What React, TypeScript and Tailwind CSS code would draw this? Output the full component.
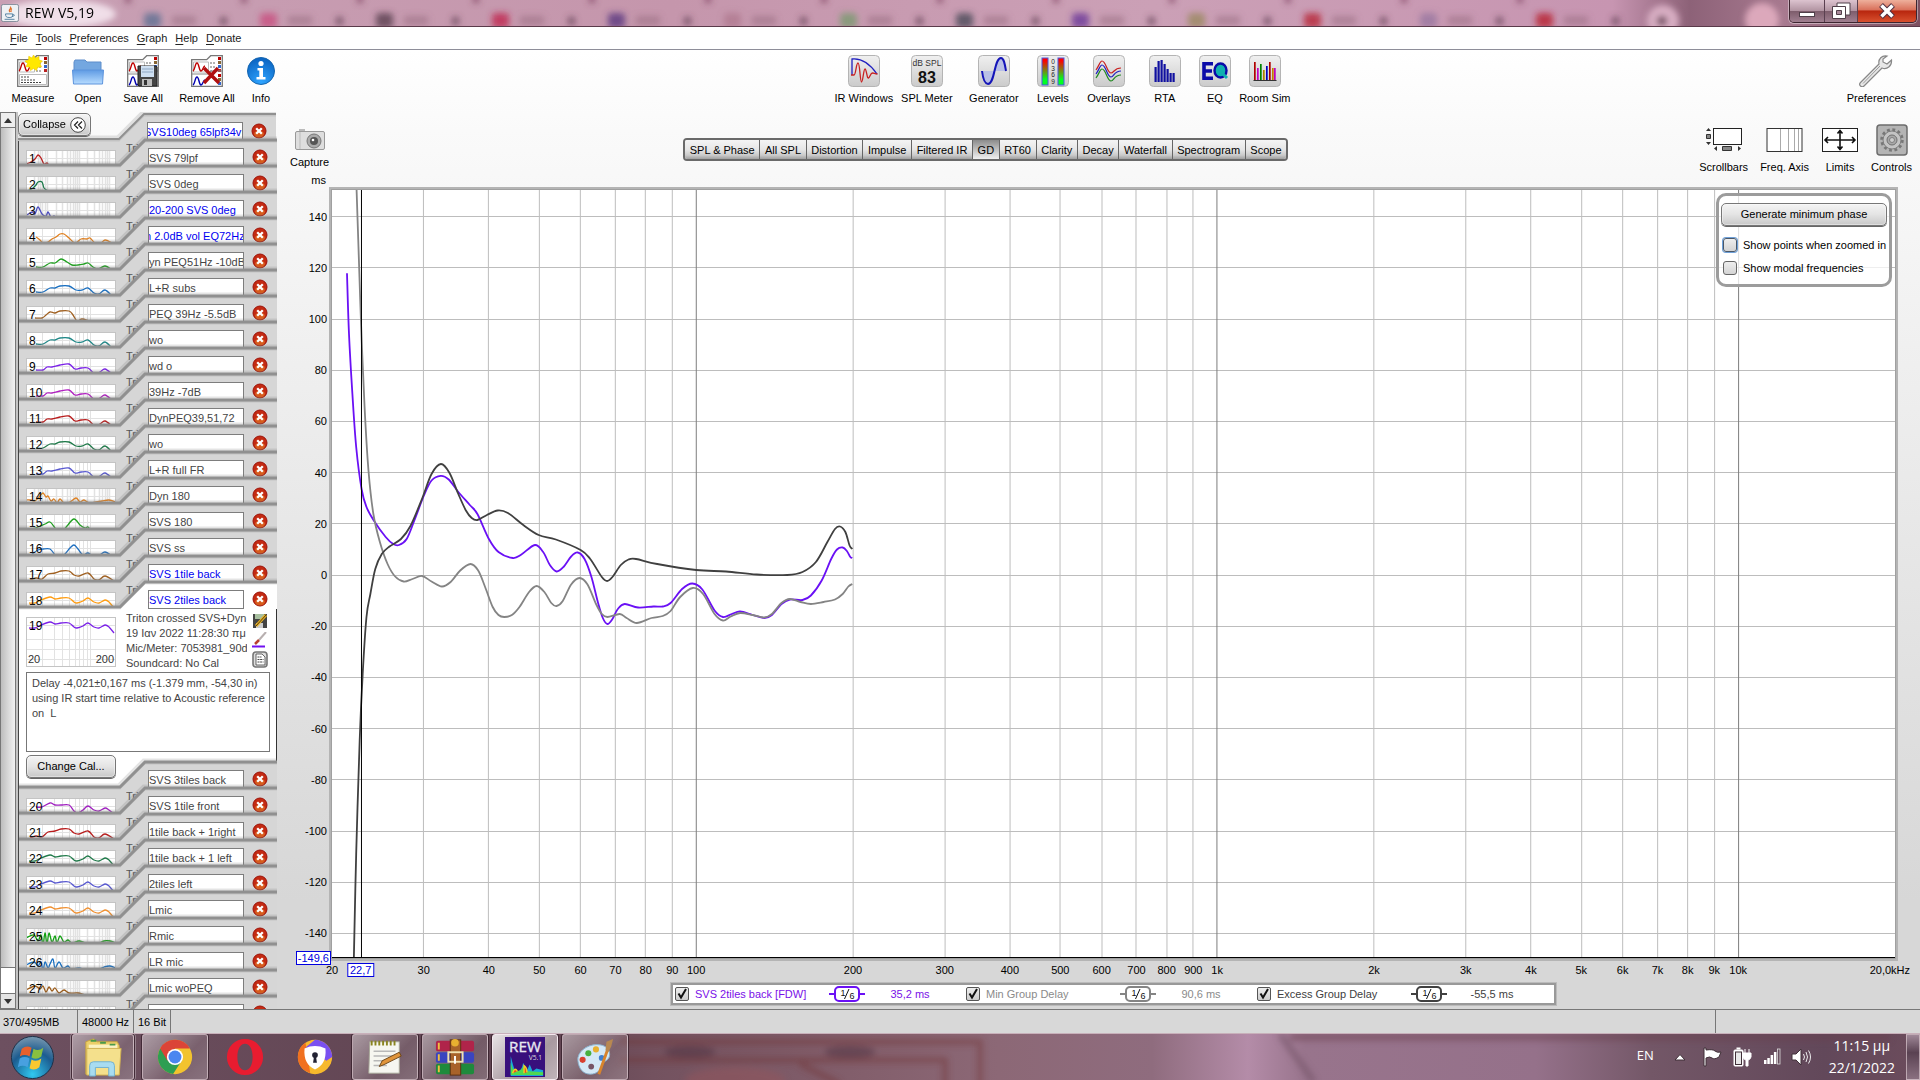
import React from 'react';

type Point = [number, number];

/* ---------- helpers ---------- */

// Catmull-Rom spline through the points, as a path string
const smooth = (pts: Point[]) => {
  let d = `M${pts[0][0]},${pts[0][1]}`;
  for (let i = 0; i < pts.length - 1; i++) {
    const p0 = pts[i - 1] ?? pts[i];
    const p1 = pts[i];
    const p2 = pts[i + 1];
    const p3 = pts[i + 2] ?? p2;
    d += `C${p1[0] + (p2[0] - p0[0]) / 6},${p1[1] + (p2[1] - p0[1]) / 6} ${p2[0] - (p3[0] - p1[0]) / 6},${p2[1] - (p3[1] - p1[1]) / 6} ${p2[0]},${p2[1]}`;
  }
  return d;
};

const toPoints = (s: string): Point[] => s.trim().split(/\s+/).map((p) => p.split(',').map(Number) as Point);

const PLOT_W = 1564;
const PLOT_H = 768;
const freqPct = (f: number) => (Math.log10(f / 20) / 3) * 100;
const msPct = (v: number) => ((150.4 - v) / 300) * 100;

/* ---------- data ---------- */

const THUMB_SHAPES = {
  low: '0,14 5,12 9,9 12,5 15,8 18,14 21,13 23,15 26,15',
  lowWide: '2,15 7,12 10,9 12,6 16,6 18,12 22,15',
  lowSpiky: '1,13 6,10 9,12 12,5 16,12 20,14 22,10 25,15 28,14 29,16',
  hump: '10,9 14,12 17,15 22,14 26,11 30,9 34,6 38,6 43,10 49,15 55,11 61,11 64,10 69,15 74,16 79,12 86,15',
  hump2: '10,13 17,13 24,9 29,9 35,5 41,8 46,11 52,11 58,10 62,9 67,13 72,15 79,12 86,16',
  level: '10,12 17,12 24,8 29,8 34,6 43,6 50,10 56,10 62,8 68,13 73,14 79,10 86,16',
  cut: '9,12 16,12 20,9 24,6 29,7 34,5 43,5 47,9 51,15 56,13 63,15 66,16',
  bassy: '10,12 17,12 21,9 26,9 34,7 43,6 49,11 55,10 62,10 69,16 74,14 79,11 86,16',
  noise: '0,12 5,12 9,13 14,8 17,5 20,9 22,8 25,13 28,11 31,15 34,11 38,15 44,14 50,10 54,14 58,12 63,15 70,14 76,13 83,12 90,14',
  arch: '6,15 12,13 19,10 24,8 29,14 32,17 36,18 41,12 48,5 54,11 59,14 62,13 66,17 74,16 82,16',
  arch2: '6,14 12,10 17,9 24,9 29,15 32,18 38,15 44,8 48,5 52,9 57,15 62,13 68,17 74,15 79,12 86,16',
  full: '3,11 9,11 15,8 24,5 29,7 35,6 43,6 48,10 51,11 57,9 62,6 68,10 73,11 79,8 83,10 88,16',
  full2: '10,9 16,9 24,5 29,7 35,7 43,7 48,13 52,15 57,12 62,8 68,12 73,13 79,10 83,12 87,15',
  full3: '4,14 10,12 16,13 22,8 29,7 35,5 43,5 48,9 53,10 62,7 68,13 73,14 79,10 88,15',
  spikes: '0,10 8,7 12,13 15,7 17,17 19,5 21,16 23,5 26,14 29,8 31,15 34,8 38,14 42,12 46,15 53,13 60,15 70,16 78,13 84,13 90,15',
  spikes2: '0,11 8,8 12,12 15,8 17,17 19,8 22,14 24,10 27,5 29,14 33,8 37,14 42,12 45,15 53,14 60,16 70,16 78,13 84,12 90,14',
  slope: '0,10 9,6 14,9 17,6 20,12 23,7 26,11 29,8 33,13 38,10 43,13 52,13 60,15 70,15 80,16 90,16',
};

interface Measurement {
  title: string;
  color: string;
  shape: keyof typeof THUMB_SHAPES;
  blue?: boolean;
  wide?: boolean;
  scrolled?: boolean;
}

const MEASUREMENTS: Measurement[] = [
  { title: 'SVS10deg 65lpf34v', color: '#b81c1c', shape: 'low', blue: true, wide: true, scrolled: true },
  { title: 'SVS 79lpf', color: '#1a7a4a', shape: 'lowWide', wide: true },
  { title: 'SVS 0deg', color: '#4a4ac0', shape: 'lowSpiky', wide: true },
  { title: '20-200 SVS 0deg', color: '#e08020', shape: 'hump', blue: true },
  { title: 'n 2.0dB vol EQ72Hz', color: '#20a020', shape: 'hump2', blue: true, scrolled: true },
  { title: 'yn PEQ51Hz -10dB', color: '#1a6fc0', shape: 'level' },
  { title: 'L+R subs', color: '#a06020', shape: 'cut' },
  { title: 'PEQ 39Hz -5.5dB', color: '#208888', shape: 'level' },
  { title: 'wo', color: '#7a20e8', shape: 'bassy' },
  { title: 'wd o', color: '#b020c0', shape: 'bassy' },
  { title: '39Hz -7dB', color: '#b81c1c', shape: 'bassy' },
  { title: 'DynPEQ39,51,72', color: '#207a4a', shape: 'level' },
  { title: 'wo', color: '#5858d0', shape: 'bassy' },
  { title: 'L+R full FR', color: '#e08020', shape: 'noise', wide: true },
  { title: 'Dyn 180', color: '#20a020', shape: 'arch' },
  { title: 'SVS 180', color: '#2070c0', shape: 'arch2' },
  { title: 'SVS ss', color: '#a06020', shape: 'full3' },
  { title: 'SVS 1tile back', color: '#ff9c10', shape: 'full', blue: true },
  { title: 'SVS 2tiles back', color: '#7a20e8', shape: 'full', blue: true },
  { title: 'SVS 3tiles back', color: '#a020c0', shape: 'full2' },
  { title: 'SVS 1tile front', color: '#b81c1c', shape: 'full3' },
  { title: '1tile back + 1right', color: '#207a4a', shape: 'full' },
  { title: '1tile back + 1 left', color: '#5858d0', shape: 'full' },
  { title: '2tiles left', color: '#f09030', shape: 'full' },
  { title: 'Lmic', color: '#10a010', shape: 'spikes', wide: true },
  { title: 'Rmic', color: '#1a70c0', shape: 'spikes2', wide: true },
  { title: 'LR mic', color: '#9a5a18', shape: 'slope', wide: true },
  { title: 'Lmic woPEQ', color: '#208888', shape: 'slope', wide: true },
  { title: '', color: '#7a20e8', shape: 'slope', wide: true },
];

const SELECTED = 18;

const GROUP_DELAY = `15,83.2 17,143.8 20.4,203.8 24.2,257 29.6,299 34.5,317 41.8,330.5 53.7,347 61.3,354 67,355 74.7,349 82.4,330.5 92,305.5 99.6,290.5 108.8,285.8
116.8,289.5 126.4,302 137.9,315 145.5,324 157,349 166.6,362 181,368 189.5,364.5 203,355 211.3,362 218,375 224.7,381.5 231.6,377 239.3,366.5 245.8,362.5 252.7,369
259.6,387 266,412 271,428 275.6,434 280.6,429 286,419 292.9,414 306.3,417.5 321.6,416.5 331,416.5 338.8,413 350.3,399 360.6,393.5 370.6,399.5 382.8,420.5
391.2,427 400,424 408.4,421.5 421,425 432.6,428 440.2,425 449.8,414 458.2,409.5 470.8,410 479.2,405.5 490,390.5 499.5,369 505.3,359.5 511,357.5 515.2,361 518.7,367 520.6,368`;

const MIN_GROUP_DELAY = `24.6,0 26.5,57 29.2,137 32.6,217 36.5,280.5 41.4,324 47.9,352 55.6,374 63.2,386.5 71.7,391.5 80.5,389 90,386 99.6,391.5 110,396.5 118.7,392
128.3,380.5 138.6,374 146.3,380.5 153.2,397 160.8,417 166.6,425 172.3,427 180,425 187.6,417 197.2,402 204.8,396 212.5,402 219.4,413 224.7,416 230.9,411
239.3,394.5 247.7,388 255.7,394.5 264.2,414 270,424 275.6,427 287.9,424 294.8,428 305,433 319.7,428 331,426 338.8,421 348.4,407 361,398 371.3,404 382.8,424
391.2,430.5 398.9,426.5 408.4,423 421,425 432.6,427.5 440.2,424 449.8,413 458.2,409 468.9,412 479.2,414 491.9,412 503.3,409.5 511,404 516.7,396.5 520.6,394`;

const EXCESS_GROUP_DELAY = `21.9,767 24.2,664 27.7,550.5 30.7,484 34.5,427 38.4,404 43.3,379 49.8,364 57.5,356.5 69,349 78.5,336 90,309 99.6,284 109,274 117.6,283
126.4,304 134,320.5 139.8,328 145.5,330 155,325 165.8,320.5 176,323 191.4,335 206.8,345 224,349.5 248.8,360 258.4,369 270,387 275.3,391 280.6,387 289,375
296.7,369.5 304.3,369 325.4,374 364.4,380 394.3,381.5 425,384.5 455.5,385 470.8,382 484.2,372 495.7,352 503.3,339 508.3,336.5 513.7,342 517.9,355.5 520.6,359`;

const GRID_FREQS = [
  30, 40, 50, 60, 70, 80, 90, 100, 200, 300, 400, 500, 600, 700, 800, 900, 1000, 2000, 3000, 4000, 5000, 6000, 7000, 8000, 9000, 10000,
];
const MS_VALUES = [140, 120, 100, 80, 60, 40, 20, 0, -20, -40, -60, -80, -100, -120, -140];

const freqLabel = (f: number) => (f >= 1000 ? `${f / 1000}k` : `${f}`);

/* ---------- title bar ---------- */

const BLURRED_TABS = [
  '#5f6f92', '#c85080', '#5a4050', '#c02850', '#5a3a80', '#b07a90', '#7a9a70', '#4a4a58', '#6a3a98', '#9a8a60', '#b82838', '#9878a0', '#b82030',
];

const TitleBar: React.FC = () => (
  <header className="relative flex h-[27px] shrink-0 items-start overflow-hidden border-b border-[#5a3a4a] bg-[linear-gradient(90deg,#c8a0b4_0%,#c596ac_35%,#cba0b6_60%,#c795b1_84%,#8d6278_88%,#a87a90_93%,#7d5060_100%)]">
    <svg className="absolute inset-0 h-full w-full" aria-hidden="true">
      <defs>
        <filter id="soft" x="-5%" y="-50%" width="110%" height="200%">
          <feGaussianBlur stdDeviation="3" />
        </filter>
      </defs>
      <g filter="url(#soft)">
        {BLURRED_TABS.map((color, i) => (
          <g key={i}>
            <rect x={144 + i * 116} y="13" width="17" height="15" rx="4" fill={color} opacity=".8" />
            <rect x={172 + i * 116} y="16" width="24" height="9" fill="#94687d" opacity=".5" />
            <rect x={220 + i * 116} y="17" width="7" height="8" fill="#5e3d4e" opacity=".7" />
            <rect x={125 + i * 116} y="-4" width="6" height="7" fill="#7a3c58" opacity=".7" />
          </g>
        ))}
        <circle cx="1663" cy="21" r="16" fill="#d8aec3" />
        <circle cx="1662" cy="21" r="5" fill="#6a4458" />
        <circle cx="1762" cy="20" r="17" fill="#dca8bb" />
        <ellipse cx="60" cy="14" rx="56" ry="14" fill="#f4e6ee" opacity=".9" />
      </g>
    </svg>
    <svg viewBox="0 0 20 20" className="relative mt-1 h-[18px] w-5" aria-hidden="true">
      <rect x=".5" y=".5" width="19" height="19" rx="2" fill="#eef1f4" stroke="#7b8794" />
      <path d="M10 3c3 2-3 3 0 6M12 5c-2 2 0 2-1 4" stroke="#e2702a" fill="none" strokeWidth="1.3" />
      <path d="M5 11h8c0 4-1 4-4 4s-4-1-4-4ZM13 12c3-1 2 2-1 2M4 17h11" stroke="#4b7a9c" fill="none" />
    </svg>
    <h1 className="relative ml-[5px] font-['Open_Sans',sans-serif] text-[14px] leading-[26px] text-black">REW V5,19</h1>
    <div className="relative ml-auto mr-[3px] flex h-[23px] overflow-hidden rounded-b-[5px] border border-t-0 border-[#3c2530] shadow-[0_0_0_1px_rgba(255,255,255,0.4)]">
      <button type="button" aria-label="Minimize" className="flex w-[35px] items-center justify-center border-r border-[#5a4050] bg-[linear-gradient(#dcc3cf,#b294a2_48%,#7d5c6b_50%,#a07f90)]">
        <svg viewBox="0 0 18 14" className="h-[14px] w-[18px]"><rect x="1.500" y="8.500" width="15" height="4" fill="#fff" stroke="#50404a" /></svg>
      </button>
      <button type="button" aria-label="Restore" className="flex w-[33px] items-center justify-center border-r border-[#5a4050] bg-[linear-gradient(#dcc3cf,#b294a2_48%,#7d5c6b_50%,#a07f90)]">
        <svg viewBox="0 0 20 18" className="h-[18px] w-5">
          <path d="M6 1h13v12H6z" fill="#fff" stroke="#50404a" />
          <path d="M1.500 4.500h13v12h-13z" fill="#fff" stroke="#50404a" />
          <path d="M5.500 8.500h5v4h-5z" fill="#a98a9a" stroke="#50404a" />
        </svg>
      </button>
      <button type="button" aria-label="Close" className="flex w-[58px] items-center justify-center bg-[linear-gradient(#eeb09c,#d9705a_45%,#b8260e_50%,#d8502e)]">
        <svg viewBox="0 0 18 16" className="h-4 w-[18px]">
          <path d="M3 2l12 12M15 2L3 14" stroke="#503040" strokeWidth="5.500" />
          <path d="M3.500 2.500l11 11M14.500 2.500l-11 11" stroke="#fff" strokeWidth="3.500" />
        </svg>
      </button>
    </div>
  </header>
);

const MenuBar: React.FC = () => (
  <nav className="flex h-[23px] shrink-0 items-center gap-2 border-b border-[#8e8e99] bg-white pl-[10px] text-[#222]">
    {['File', 'Tools', 'Preferences', 'Graph', 'Help', 'Donate'].map((m) => (
      <button type="button" key={m}>
        <span className="underline underline-offset-2">{m[0]}</span>
        {m.slice(1)}
      </button>
    ))}
  </nav>
);

/* ---------- toolbar icons ---------- */

const Tile: React.FC<{ children: React.ReactNode }> = ({ children }) => (
  <svg viewBox="0 0 32 32" className="h-8 w-8">
    <defs>
      <linearGradient id="tile" x1="0" y1="0" x2="0" y2="1">
        <stop offset="0" stopColor="#f0f0f0" />
        <stop offset="1" stopColor="#cbcbcb" />
      </linearGradient>
    </defs>
    <rect x=".5" y=".5" width="31" height="31" rx="4" fill="url(#tile)" stroke="#b4b4b4" />
    {children}
  </svg>
);

const Sheet: React.FC<{ stacked?: boolean; children: React.ReactNode }> = ({ stacked, children }) => (
  <svg viewBox="0 0 32 32" className="h-8 w-8">
    <path d="M.7 4.700h15l4-4h11.600v30.600H.7z" fill="#fff" stroke="#777" strokeWidth="1.300" />
    <path d="M2.500 7h15v10h-15z" fill="#fff" stroke="#bbb" />
    <path d="M2 16c2-1 2-8 4-8s2 8 4 8 2-5 4-5" fill="none" stroke="#c00000" strokeWidth="1.400" />
    <path d="M19 8h6M19 12h6M19 16h6" stroke="#666" strokeDasharray="2 1" />
    <rect x="27" y="2" width="3" height="3" fill="#b00" />
    <rect x="27" y="6" width="3" height="3" fill="#863" />
    <rect x="27" y="10" width="3" height="3" fill="#36c" />
    <rect x="27" y="14" width="3" height="3" fill="#b22" />
    {stacked ? (
      <>
        <path d="M1 19h16l3-3h11" fill="none" stroke="#888" />
        <path d="M2 30c2-1 2-8 4-8s2 8 4 8 2-5 4-5" fill="none" stroke="#0000b0" strokeWidth="1.400" />
        <rect x="27" y="19" width="3" height="3" fill="#b00" />
        <rect x="27" y="23" width="3" height="3" fill="#863" />
        <rect x="27" y="27" width="3" height="3" fill="#36c" />
      </>
    ) : (
      <>
        <path d="M2.500 19.500h27v10h-27z" fill="#fff" stroke="#bbb" />
        <path d="M4 22h8M4 25h14M4 27.500h20" stroke="#444" strokeDasharray="2 1" />
      </>
    )}
    {children}
  </svg>
);

const MeasureIcon = (
  <Sheet>
    <path d="M16.500 0l2 3 3.500-1.500 0 3.500 3.500 1-2.500 2.500 1.500 3.500-3.800.2-1.200 3.300-3-2-3 2-.8-3.500-3.700-.2 1.500-3.400L8 6l3.500-1 .3-3.700L15 3z" fill="#ffe800" stroke="#f0c800" strokeWidth=".6" />
  </Sheet>
);

const OpenIcon = (
  <svg viewBox="0 0 32 32" className="h-8 w-8">
    <defs>
      <linearGradient id="folder" x1="0" y1="0" x2="0" y2="1">
        <stop offset="0" stopColor="#5f9be4" />
        <stop offset="1" stopColor="#b7dcff" />
      </linearGradient>
    </defs>
    <path d="M2 7l1-2h10l2 2h14v10H2z" fill="#74a7e0" stroke="#5d8dca" />
    <path d="M.5 15h31l-1 14H1.500z" fill="url(#folder)" stroke="#5c93dc" />
  </svg>
);

const SaveAllIcon = (
  <Sheet stacked>
    <path d="M11 11h18l1 1v19H12l-1-1z" fill="#444" stroke="#222" />
    <rect x="14" y="11" width="13" height="11" fill="#cfe0f2" />
    <path d="M15 14h11M15 17h11" stroke="#8fa8c4" />
    <rect x="15" y="24" width="10" height="7" fill="#bbb" />
    <rect x="17" y="25" width="3" height="5" fill="#333" />
  </Sheet>
);

const RemoveAllIcon = (
  <Sheet stacked>
    <path d="M13 13l15 15M27 13L13 28" stroke="#b01010" strokeWidth="3.400" />
  </Sheet>
);

const InfoIcon = (
  <svg viewBox="0 0 28 32" className="h-8 w-7">
    <defs>
      <radialGradient id="info" cx=".5" cy=".9" r=".9">
        <stop offset="0" stopColor="#2ea4ff" />
        <stop offset="1" stopColor="#0a62c0" />
      </radialGradient>
    </defs>
    <circle cx="14" cy="16" r="13.500" fill="url(#info)" stroke="#1566b0" />
    <circle cx="14" cy="8.500" r="2.600" fill="#fff" />
    <path d="M10.500 13h5.500v9h2.500v2.500h-9V22h2.800v-6.500h-1.800z" fill="#fff" />
  </svg>
);

const IrIcon = (
  <Tile>
    <path d="M4 20V4c9-1 18 5 25 15" fill="none" stroke="#2020c0" strokeWidth="1.300" />
    <path d="M3 20h3c2 0 2-12 4-12s2 19 3.500 19 2-13 3.500-13 2 10 3.500 9 2-5 4-5 2 1 5 1" fill="none" stroke="#c82020" strokeWidth="1.300" />
  </Tile>
);

const SplIcon = (
  <Tile>
    <text x="16" y="11" textAnchor="middle" fontSize="8.500" fill="#333">dB SPL</text>
    <text x="16" y="28" textAnchor="middle" fontSize="16" fontWeight="bold" fill="#111">83</text>
  </Tile>
);

const GeneratorIcon = (
  <Tile>
    <path d="M4 16h24c-1-8-3-13-5-13-4 0-6 13-6 13s-1 12-6 12c-4 0-6-6-7-12z" fill="#b9c0e6" />
    <path d="M4 16c1 8 3 13 6 13 7 0 6-26 13-26 3 0 4 7 5 13" fill="none" stroke="#1515b8" strokeWidth="2" />
  </Tile>
);

const LevelsIcon = (
  <Tile>
    <defs>
      <linearGradient id="level" x1="0" y1="0" x2="0" y2="1">
        <stop offset=".1" stopColor="#ff0000" />
        <stop offset=".8" stopColor="#00ff20" />
      </linearGradient>
    </defs>
    <rect x="5" y="3" width="6" height="27" fill="url(#level)" stroke="#4a58e0" />
    <rect x="21" y="3" width="6" height="27" fill="url(#level)" stroke="#4a58e0" />
    {['0', '3', '6', '9'].map((n, i) => (
      <text key={n} x="16" y={9 + i * 6.500} textAnchor="middle" fontSize="6.500" fill="#222">{n}</text>
    ))}
  </Tile>
);

const OverlaysIcon = (
  <Tile>
    <path d="M3 15c3-4 4-9 6-9 4 0 5 12 9 12 3 0 3-5 10-5" fill="none" stroke="#c82020" strokeWidth="1.200" />
    <path d="M3 19c3-4 4-9 6-9 4 0 5 12 9 12 3 0 3-6 10-6" fill="none" stroke="#2020c0" strokeWidth="1.200" />
    <path d="M3 23c3-4 4-9 6-9 4 0 5 12 9 12 3 0 3-6 10-6" fill="none" stroke="#208820" strokeWidth="1.200" />
  </Tile>
);

const RtaIcon = (
  <Tile>
    {[15, 21, 22, 18, 13, 9, 9].map((h, i) => (
      <rect key={i} x={5.500 + i * 3} y={27 - h} width="2.200" height={h} fill="#1010a0" />
    ))}
  </Tile>
);

const EqIcon = (
  <Tile>
    <path d="M14 8.800H5v14.400h9M5 16h8" fill="none" stroke="#0a0aa8" strokeWidth="3.600" />
    <ellipse cx="21.500" cy="15.500" rx="6" ry="7" fill="#10b0b0" stroke="#0a0aa8" strokeWidth="2.400" />
    <path d="M22 17l6 6" stroke="#10b0b0" strokeWidth="3" />
  </Tile>
);

const RoomIcon = (
  <Tile>
    <path d="M4.500 25.500h23" stroke="#333" />
    {[
      [5, 18, '#b00000'], [8, 12, '#c000c0'], [11, 16, '#008000'], [14, 10, '#b08000'], [17, 14, '#0000c0'], [20, 18, '#b00000'], [23, 12, '#c08000'], [25, 12, '#c000c0'],
    ].map(([x, h, c]) => (
      <rect key={x} x={x} y={25 - Number(h)} width="1.700" height={h} fill={String(c)} />
    ))}
  </Tile>
);

const WrenchIcon = (
  <svg viewBox="0 0 34 32" className="h-8 w-[34px]">
    <path d="M28 1c-5-1-9 3-8 8L1.500 27.500a2.400 2.400 0 003.500 3.500L23 13c5 2 10-2 9.500-8L28 9l-4-2V4z" fill="#e8e8e8" stroke="#888" strokeWidth="1.200" />
    <path d="M21 11L4 28.500" stroke="#999" strokeWidth="1" />
  </svg>
);

const ToolButton: React.FC<{ label: string; icon: React.ReactNode; className?: string }> = ({ label, icon, className = '' }) => (
  <button type="button" className={`flex flex-col items-center gap-1 whitespace-nowrap ${className}`}>
    {icon}
    <span className="leading-[14px]">{label}</span>
  </button>
);

const Toolbar: React.FC = () => (
  <div className="flex h-[62px] shrink-0 items-start justify-between pl-[9px] pr-[14px] pt-[5px]">
    <div className="flex">
      <ToolButton label="Measure" icon={MeasureIcon} className="w-12" />
      <ToolButton label="Open" icon={OpenIcon} className="w-[62px]" />
      <ToolButton label="Save All" icon={SaveAllIcon} className="w-12" />
      <ToolButton label="Remove All" icon={RemoveAllIcon} className="w-20" />
      <ToolButton label="Info" icon={InfoIcon} className="w-7" />
    </div>
    <div className="flex">
      <ToolButton label="IR Windows" icon={IrIcon} className="w-[62px]" />
      <ToolButton label="SPL Meter" icon={SplIcon} className="w-16" />
      <ToolButton label="Generator" icon={GeneratorIcon} className="w-[70px]" />
      <ToolButton label="Levels" icon={LevelsIcon} className="w-12" />
      <ToolButton label="Overlays" icon={OverlaysIcon} className="w-16" />
      <ToolButton label="RTA" icon={RtaIcon} className="w-12" />
      <ToolButton label="EQ" icon={EqIcon} className="w-[52px]" />
      <ToolButton label="Room Sim" icon={RoomIcon} className="w-12" />
    </div>
    <ToolButton label="Preferences" icon={WrenchIcon} />
  </div>
);

/* ---------- measurement list ---------- */

const Thumb: React.FC<{ index: number; tall?: boolean }> = ({ index, tall }) => {
  const m = MEASUREMENTS[index];
  const lines = m.wide
    ? [8, 12, 14, 16, 19, 21, 30, 36, 41, 44, 47, 49, 51, 53, 61, 68, 73, 76, 79, 81, 83]
    : [16, 28, 36, 43, 49, 53, 57, 61, 64];
  return (
    <div className={`relative w-[90px] shrink-0 overflow-hidden border border-[#c4c4c4] bg-white ${tall ? 'h-[50px]' : 'h-[16px] border-b-0'}`}>
      <svg className="absolute inset-0" width="88" height="50" viewBox="1 1 88 50" aria-hidden="true">
        {lines.map((x) => (
          <path key={x} d={`M${x + 0.5} 0V50`} stroke="#e2e2e2" strokeWidth={m.wide ? 1.5 : 1} />
        ))}
        <path d="M0 8.500H90M0 22.500H90M0 32.500H90M0 42.500H90" stroke="#e2e2e2" />
        <path d={smooth(toPoints(THUMB_SHAPES[m.shape]))} fill="none" stroke={m.color} strokeWidth="1.300" />
      </svg>
      <span className={`relative block pl-[2px] text-[12px] leading-[16px] text-black ${index < 10 ? 'underline' : ''}`}>{index + 1}</span>
      {tall && (
        <div className="relative mt-[18px] flex justify-between px-[1px] leading-[14px] text-[#333]">
          <span>20</span>
          <span>200</span>
        </div>
      )}
    </div>
  );
};

const DeleteButton: React.FC = () => (
  <button type="button" aria-label="Remove measurement" className="relative ml-2 h-4 w-4">
    <svg viewBox="0 0 16 16" className="h-full w-full">
      <circle cx="8" cy="8" r="7" fill="#c32a12" stroke="#9d1208" />
      <ellipse cx="8" cy="11" rx="5" ry="3.500" fill="#e07020" opacity=".7" />
      <path d="M5.200 5.200l5.600 5.600M10.800 5.200l-5.600 5.600" stroke="#fff" strokeWidth="2.300" />
    </svg>
  </button>
);

const MeasurementRow: React.FC<{ index: number }> = ({ index }) => {
  const m = MEASUREMENTS[index];
  const afterSelected = index === SELECTED + 1;
  return (
    <div className={`relative flex h-[26px] items-start ${afterSelected ? 'bg-white' : ''}`}>
      <div className="flex w-[129px] shrink-0 items-start pl-[7px]">
        {index > 0 && !afterSelected && (
          <>
            <div className="pt-[9px]">
              <Thumb index={index - 1} />
            </div>
            <span className="ml-[10px] w-4 overflow-hidden text-[#555]">Triton</span>
          </>
        )}
      </div>
      {/* folder tab edge, drawn over the card behind it */}
      <svg className="pointer-events-none absolute inset-0 overflow-visible" width="258" height="26" viewBox="0 0 258 26" aria-hidden="true">
        <path d="M0 25H101L126 0H258V26H0z" fill={index === SELECTED ? '#ffffff' : '#d6d6d6'} />
        <path d="M0 23.500H100L125 -1.500H258" fill="none" stroke="#777" strokeOpacity=".2" strokeWidth="6" />
        <path d="M0 24H101L126 -1H258" fill="none" stroke="#909090" strokeWidth={index === 0 ? 2 : 3} />
      </svg>
      <input
        type="text"
        aria-label={`Measurement ${index + 1} name`}
        defaultValue={m.title}
        className={`relative mt-[7px] h-[19px] w-24 shrink-0 border border-[#7d7d7d] bg-white ${m.blue ? 'text-[#0000f0]' : 'text-[#444]'} ${m.scrolled ? '-indent-1' : ''}`}
      />
      <div className="pt-2">
        <DeleteButton />
      </div>
    </div>
  );
};

const glossy = 'rounded-[5px] border border-[#777] bg-[linear-gradient(#f4f4f4,#e4e4e4_50%,#c8c8c8)] shadow-[inset_0_0_0_1px_rgba(255,255,255,0.4),0_1px_0_#666]';

const SelectedDetails: React.FC = () => (
  <div className="h-[154px] bg-white pl-[7px] pr-[6px] pt-[2px]">
    <div className="flex">
      <div className="pt-[6px]">
        <Thumb index={SELECTED} tall />
      </div>
      <div className="ml-[10px] w-[121px] overflow-hidden whitespace-nowrap leading-[15px] text-[#444]">
        <p>Triton crossed SVS+Dyn</p>
        <p>19 Ιαν 2022 11:28:30 πμ</p>
        <p>Mic/Meter: 7053981_90d</p>
        <p>Soundcard: No Cal</p>
      </div>
      <div className="ml-[5px] flex flex-col gap-[3px] pt-[2px]">
        <svg viewBox="0 0 16 16" className="h-4 w-4">
          <path d="M1 1h14v14H1z" fill="#444" />
          <path d="M3 1h9v5H3z" fill="#a8c0a0" />
          <path d="M4 10h7v5H4z" fill="#ccc" />
          <path d="M4 13L14 2" stroke="#e8b020" strokeWidth="3" />
          <path d="M4 13L14 2" stroke="#302010" strokeWidth=".8" />
        </svg>
        <svg viewBox="0 0 16 16" className="h-4 w-4">
          <path d="M14 0L7 8" stroke="#b8b0b0" strokeWidth="2" />
          <path d="M7 8l-4 4" stroke="#b84030" strokeWidth="2.500" />
          <path d="M0 14.500h13" stroke="#7010f0" strokeWidth="2" />
        </svg>
        <svg viewBox="0 0 16 17" className="h-[17px] w-4">
          <rect x="1" y="1" width="14" height="15" rx="3" fill="#ddd" stroke="#777" strokeWidth="1.600" />
          <path d="M4 3h6l3 3v8H4z" fill="#fff" stroke="#444" strokeWidth=".8" />
          <path d="M5.500 6h4M5.500 8.500h6M5.500 11h6" stroke="#333" strokeWidth=".9" strokeDasharray="2 .6" />
        </svg>
      </div>
    </div>
    <textarea
      aria-label="Measurement notes"
      className="mt-px block h-20 w-full resize-none border border-[#777] bg-white py-[3px] pl-[5px] leading-[15px] text-[#444]"
      defaultValue={'Delay -4,021±0,167 ms (-1.379 mm, -54,30 in)\nusing IR start time relative to Acoustic reference\non  L'}
    />
    <button type="button" className={`relative z-10 mt-[3px] h-[23px] w-[90px] ${glossy}`}>Change Cal...</button>
  </div>
);

const ScrollBar: React.FC = () => (
  <div className="flex w-4 shrink-0 flex-col border-x border-[#777] bg-[linear-gradient(90deg,#bdbdbd,#f2f2f2)]">
    <button type="button" aria-label="Scroll up" className="flex h-4 items-center justify-center border-y border-[#777] bg-[#eee]">
      <svg viewBox="0 0 8 5" className="h-[5px] w-2"><path d="M0 5l4-5 4 5z" fill="#333" /></svg>
    </button>
    <div className="grow" />
    <div className="h-[26px] border-t border-[#777] bg-white" />
    <button type="button" aria-label="Scroll down" className="flex h-4 items-center justify-center border-y border-[#777] bg-[#e4e4e4]">
      <svg viewBox="0 0 8 5" className="h-[5px] w-2"><path d="M0 0l4 5 4-5z" fill="#333" /></svg>
    </button>
  </div>
);

const Sidebar: React.FC = () => (
  <aside className="flex w-[277px] shrink-0 overflow-hidden">
    <ScrollBar />
    <div className="w-[2px] shrink-0 bg-[#c4c4c4]" />
    <div className="relative w-[259px] shrink-0 overflow-hidden">
      {/* room above the first card's left half, holding the collapse button */}
      <div className="h-[3px]" />
      <button type="button" className={`absolute left-0 top-px z-10 flex h-[23px] w-[73px] items-center justify-center gap-1 ${glossy}`}>
        Collapse
        <svg viewBox="0 0 16 16" className="h-4 w-4">
          <circle cx="8" cy="8" r="7.300" fill="#fff" stroke="#444" />
          <path d="M8 4.500L4.500 8 8 11.500M12 4.500L8.500 8l3.500 3.500" fill="none" stroke="#222" strokeWidth="1.200" />
        </svg>
      </button>
      <MeasurementRow index={0} />
      <div className="border-x border-l-[#444] border-r-[#333] bg-[#d6d6d6]">
        {MEASUREMENTS.map((_, i) =>
          i === 0 ? null : (
            <React.Fragment key={i}>
              <MeasurementRow index={i} />
              {i === SELECTED && <SelectedDetails />}
            </React.Fragment>
          ),
        )}
      </div>
    </div>
  </aside>
);

/* ---------- graph ---------- */

const GRAPH_TABS = ['SPL & Phase', 'All SPL', 'Distortion', 'Impulse', 'Filtered IR', 'GD', 'RT60', 'Clarity', 'Decay', 'Waterfall', 'Spectrogram', 'Scope'];

const GraphHeader: React.FC = () => (
  <div className="flex h-[78px] shrink-0 items-start justify-between pl-[13px] pr-2">
    <div className="w-10">
      <button type="button" className="mt-[17px] flex flex-col items-center gap-1">
        <svg viewBox="0 0 30 22" className="h-[22px] w-[30px]">
          <rect x="4" y="0" width="6" height="4" fill="#bbb" />
          <rect x=".5" y="2.500" width="29" height="18" rx="1.500" fill="#dedede" stroke="#999" />
          <path d="M5 3v17" stroke="#bbb" />
          <circle cx="19" cy="12" r="7" fill="#aaa" stroke="#777" />
          <circle cx="19" cy="12" r="4" fill="#555" />
          <circle cx="18" cy="11" r="1.300" fill="#fff" />
        </svg>
        <span className="leading-[14px]">Capture</span>
      </button>
      <p className="mt-1 pr-1 text-right leading-[14px]">ms</p>
    </div>
    <div role="tablist" className="mr-[58px] mt-[26px] flex h-[23px] w-[605px] overflow-hidden rounded border-2 border-[#6a6a6a]">
      {GRAPH_TABS.map((t) => (
        <button
          type="button"
          role="tab"
          key={t}
          aria-selected={t === 'GD'}
          className={`grow whitespace-nowrap border-r border-[#666] pt-px last:border-r-0 ${
            t === 'GD' ? 'bg-[linear-gradient(#8c8c8c,#c0c0c0_50%,#f0f0f0)]' : 'bg-[linear-gradient(#f4f4f4,#e6e6e6_50%,#cacaca_80%,#a0a0a0)]'
          }`}
        >
          {t}
        </button>
      ))}
    </div>
    <div className="mt-3 flex gap-3">
      <ToolButton
        label="Scrollbars"
        icon={
          <svg viewBox="0 0 38 32" className="h-8 w-[38px]">
            <rect x="8.500" y="4.500" width="28" height="16" fill="#fff" stroke="#222" />
            <path d="M1 7l2.500-3L6 7zM1 18l2.500 3L6 18zM12 22v5l-3-2.500zM33 22v5l3-2.500z" fill="#333" />
            <path d="M1.500 10.500h4v4h-4zM17.500 22.500h9v4h-9z" fill="#888" stroke="#333" />
          </svg>
        }
      />
      <ToolButton
        label="Freq. Axis"
        icon={
          <svg viewBox="0 0 38 32" className="h-8 w-[38px]">
            <rect x="1" y="4.500" width="35" height="23" fill="#fff" stroke="#333" />
            <path d="M14.500 5v22M22.500 5v22M28.500 5v22M32.500 5v22" stroke="#aaa" />
          </svg>
        }
      />
      <ToolButton
        label="Limits"
        icon={
          <svg viewBox="0 0 38 32" className="h-8 w-[38px]">
            <rect x="1.500" y="4.500" width="35" height="23" fill="#fff" stroke="#222" />
            <path d="M19 7v18M4 16h30M16.500 9.500L19 6.500l2.500 3M16.500 22.500l2.500 3 2.500-3M7 13l-3 3 3 3M31 13l3 3-3 3" fill="none" stroke="#111" strokeWidth="1.600" />
          </svg>
        }
      />
      <ToolButton
        label="Controls"
        icon={
          <svg viewBox="0 0 32 32" className="h-8 w-8">
            <rect x="1" y="1" width="30" height="30" rx="3" fill="#b4b4b4" stroke="#6c6c6c" strokeWidth="1.500" />
            <circle cx="16" cy="16" r="10" fill="none" stroke="#777" strokeWidth="3.500" strokeDasharray="2.740 2.500" />
            <circle cx="16" cy="16" r="9" fill="#c4c4c4" stroke="#808080" />
            <circle cx="16" cy="16" r="5" fill="#a8a8a8" stroke="#707070" />
            <circle cx="16" cy="16" r="2.500" fill="#ccc" stroke="#808080" />
          </svg>
        }
      />
    </div>
  </div>
);

const ControlsPanel: React.FC = () => (
  <div className="absolute right-[3px] top-[3px] flex h-[94px] w-[176px] flex-col rounded-[10px] border-[3px] border-[#9c9c9c] bg-white/75 px-[2px] pt-[7px]">
    <button type="button" className={`h-[23px] shrink-0 ${glossy}`}>Generate minimum phase</button>
    <label className="mt-[11px] flex items-center gap-[6px] whitespace-nowrap pl-[2px] leading-[16px]">
      <input type="checkbox" className="h-[14px] w-[14px] shrink-0 appearance-none rounded-[3px] border border-[#4a5868] bg-[linear-gradient(#eee,#d4d4d4)] shadow-[0_0_0_1px_#6fa0d8]" />
      Show points when zoomed in
    </label>
    <label className="mt-[7px] flex items-center gap-[6px] whitespace-nowrap pl-[2px] leading-[16px]">
      <input type="checkbox" className="h-[14px] w-[14px] shrink-0 appearance-none rounded-[3px] border border-[#666] bg-[linear-gradient(#eee,#d4d4d4)]" />
      Show modal frequencies
    </label>
  </div>
);

const GroupDelayPlot: React.FC = () => (
  <div className="relative min-h-0 grow bg-white shadow-[0_0_0_1px_#a0a0a0,0_0_0_3px_#b4b4b4]">
    <svg className="absolute inset-0 h-full w-full" viewBox={`0 0 ${PLOT_W} ${PLOT_H}`} preserveAspectRatio="none" aria-label="Group delay graph">
      {GRID_FREQS.filter((f) => ![100, 1000, 10000].includes(f)).map((f) => {
        const x = Math.floor((freqPct(f) * PLOT_W) / 100) + 0.5;
        return <path key={f} d={`M${x} 0V${PLOT_H}`} stroke="#bdbdbd" />;
      })}
      {MS_VALUES.map((v) => {
        const y = Math.floor((msPct(v) * PLOT_H) / 100) + 0.5;
        return <path key={v} d={`M0 ${y}H${PLOT_W}`} stroke="#bdbdbd" />;
      })}
      {[100, 1000, 10000].map((f) => {
        const x = Math.floor((freqPct(f) * PLOT_W) / 100) + 0.5;
        return <path key={f} d={`M${x} 0V${PLOT_H}`} stroke="#7c7c7c" />;
      })}
      <path d={smooth(toPoints(GROUP_DELAY))} fill="none" stroke="#6a10f5" strokeWidth="1.800" />
      <path d={smooth(toPoints(MIN_GROUP_DELAY))} fill="none" stroke="#848484" strokeWidth="1.800" />
      <path d={smooth(toPoints(EXCESS_GROUP_DELAY))} fill="none" stroke="#404040" strokeWidth="1.800" />
      <path d={`M29.500 0V${PLOT_H}`} stroke="#000" />
      <path d={`M0 ${PLOT_H - 0.5}H${PLOT_W}`} stroke="#000" />
    </svg>
    {MS_VALUES.map((v) => (
      <span key={v} className="absolute right-full mr-[5px] -translate-y-1/2 leading-[14px]" style={{ top: `${msPct(v)}%` }}>
        {v}
      </span>
    ))}
    {[20, ...GRID_FREQS].map((f) => (
      <span key={f} className="absolute top-full mt-[5px] -translate-x-1/2 leading-[14px]" style={{ left: `${freqPct(f)}%` }}>
        {freqLabel(f)}
      </span>
    ))}
    <span className="absolute -right-[15px] top-full mt-[5px] leading-[14px]">20,0kHz</span>
    <span className="absolute -bottom-[7px] right-full mr-[1px] border border-[#0000e0] bg-white px-[1px] leading-[12px] text-[#0000e0]">-149,6</span>
    <span className="absolute top-full mt-[5px] -translate-x-1/2 border border-[#0000e0] bg-white px-[2px] leading-[12px] text-[#0000e0]" style={{ left: `${freqPct(22.7)}%` }}>
      22,7
    </span>
    <ControlsPanel />
  </div>
);

const LEGEND = [
  { name: 'SVS 2tiles back [FDW]', value: '35,2 ms', stroke: '#6a10f5', text: 'text-[#7a10e8]' },
  { name: 'Min Group Delay', value: '90,6 ms', stroke: '#848484', text: 'text-[#8a8a8a]' },
  { name: 'Excess Group Delay', value: '-55,5 ms', stroke: '#404040', text: 'text-[#404040]' },
];

const Legend: React.FC = () => (
  <div className="flex h-[22px] border-2 border-[#999] bg-white pr-2 shadow-[0_0_0_1px_#bbb]">
    {LEGEND.map((l) => (
      <div key={l.name} className={`flex w-[291px] items-center pl-[2px] ${l.text}`}>
        <label className="flex w-[154px] items-center gap-[6px] whitespace-nowrap">
          <span className="relative h-[14px] w-[14px]">
            <input type="checkbox" defaultChecked className="block h-[14px] w-[14px] appearance-none rounded-[2px] border border-[#555] bg-[linear-gradient(#eee,#ccc)]" />
            <svg viewBox="0 0 14 14" className="pointer-events-none absolute inset-0"><path d="M3.500 6.500L6 10.500l5-8.500" fill="none" stroke="#111" strokeWidth="2" /></svg>
          </span>
          {l.name}
        </label>
        <svg viewBox="0 0 36 18" className="h-[18px] w-9">
          <path d="M0 9h36" stroke={l.stroke} strokeWidth="2" />
          <rect x="6" y="2" width="24" height="14" rx="4" fill="#fff" stroke={l.stroke} strokeWidth="2" />
          <text x="14" y="11" textAnchor="middle" fontSize="9" fill="#111">1</text>
          <path d="M15.500 14l4.500-10" stroke="#111" />
          <text x="23" y="14" textAnchor="middle" fontSize="9" fill="#111">6</text>
        </svg>
        <span className="w-[90px] text-center">{l.value}</span>
      </div>
    ))}
  </div>
);

const StatusBar: React.FC = () => (
  <footer className="flex h-6 shrink-0 items-stretch border-t border-[#777] bg-[#d8d8d8] leading-[24px]">
    <span className="w-[78px] border-r border-[#777] pl-[3px]">370/495MB</span>
    <span className="w-14 border-r border-[#777] pl-1">48000 Hz</span>
    <span className="w-[37px] border-r border-[#777] pl-1">16 Bit</span>
    <span className="ml-auto w-[205px] border-l border-[#777]" />
  </footer>
);

/* ---------- taskbar ---------- */

const TASKS: { name: string; frame: string; icon: React.ReactNode }[] = [
  {
    name: 'Explorer',
    frame: 'framed',
    icon: (
      <>
        <path d="M3 5l8-3 4 3h21l2 4v30H3z" fill="#eccf68" stroke="#c8a440" />
        <path d="M6 8h30v10H6z" fill="#fbf2c0" />
        <path d="M8 4h6M18 6h6M28 8h6" stroke="#4a9a4a" strokeWidth="2" />
        <path d="M4 12h36l-2 28H4z" fill="#f4e08c" stroke="#d0b050" />
        <path d="M7 41V30q0-4 4-4h18q4 0 4 4v11h-6v-9H13v9z" fill="#a8dcf0" stroke="#70b0d0" />
      </>
    ),
  },
  {
    name: 'Chrome',
    frame: 'framed',
    icon: (
      <>
        <circle cx="21" cy="21" r="18" fill="#f2c32e" />
        <path d="M21 21L5.400 12A18 18 0 0019 38.900L28 25z" fill="#2e9e52" />
        <path d="M21 12h15.600A18 18 0 005.400 12L13 25z" fill="#db4437" />
        <circle cx="21" cy="21" r="8.500" fill="#fff" />
        <circle cx="21" cy="21" r="6.800" fill="#4a86f0" />
      </>
    ),
  },
  {
    name: 'Opera',
    frame: 'plain',
    icon: <path fillRule="evenodd" d="M21 2a19 19 0 100 38 19 19 0 000-38zm0 5c5 0 8 6 8 14s-3 14-8 14-8-6-8-14 3-14 8-14z" fill="#e81c30" />,
  },
  {
    name: 'Secure Browser',
    frame: 'plain',
    icon: (
      <>
        <circle cx="21" cy="21" r="18" fill="#f7b92c" />
        <path d="M21 3a18 18 0 0118 18l-6 4-22-14z" fill="#7a50f0" />
        <path d="M11 6C1 12 0 28 10 35l6 3-4-26z" fill="#f07020" />
        <path d="M10 12q11-5 22 0c1 12-3 18-11 22-8-4-12-10-11-22z" fill="#fff" />
        <circle cx="21" cy="19" r="3" fill="#223" />
        <path d="M20 20h2l1 7h-4z" fill="#223" />
      </>
    ),
  },
  {
    name: 'Notepad',
    frame: 'framed',
    icon: (
      <>
        <path d="M5 5h31v33H4z" fill="#f6f6f0" stroke="#a8a898" />
        <path d="M7 4v5M11 4v5M15 4v5M19 4v5M23 4v5M27 4v5M31 4v5" stroke="#8a8420" strokeWidth="2" />
        <path d="M9 15h23M9 20h23M9 25h18M9 30h14" stroke="#b8b8b8" strokeWidth="1.500" />
        <path d="M15 31l3-6 18-9 2 4-18 9z" fill="#e0943a" stroke="#6a4418" />
      </>
    ),
  },
  {
    name: 'WinRAR',
    frame: 'framed',
    icon: (
      <>
        <rect x="1" y="4" width="40" height="11" rx="2" fill="#b0244a" />
        <rect x="1" y="16" width="40" height="11" rx="2" fill="#3a44c0" />
        <rect x="1" y="28" width="40" height="11" rx="2" fill="#1e8a3c" />
        <path d="M4 6v7M4 18v7M4 30v7" stroke="#f0c040" strokeWidth="2" />
        <rect x="16" y="3" width="11" height="37" fill="#a8622a" stroke="#5c3010" />
        <rect x="14" y="16" width="15" height="10" fill="none" stroke="#f0e0b0" strokeWidth="2" />
        <path d="M21 20v8" stroke="#fff" strokeWidth="2" />
        <circle cx="21" cy="6" r="4" fill="#e8b030" />
      </>
    ),
  },
  {
    name: 'REW',
    frame: 'active',
    icon: (
      <>
        <rect x="0" y="0" width="42" height="42" fill="#38107c" />
        <text x="21" y="16" textAnchor="middle" fontSize="16" fill="#e8e8f0" stroke="#e8e8f0" strokeWidth=".4">REW</text>
        <text x="32" y="24" textAnchor="middle" fontSize="7" fill="#ddd">V5.1</text>
        <path d="M6 41V20q3 12 5 17l3 0q4-3 5-10l4 8 3-6 3 7 4-3 7 2v6z" fill="#18a8d8" />
        <path d="M6 40V27q2 8 5 9 6 0 8-5 2 6 6 5l15 1v3z" fill="#50d850" />
        <path d="M8 38q2-7 5-2M20 38v-8q3 2 3 7" fill="#f04820" stroke="#f0d020" strokeWidth="1.500" />
      </>
    ),
  },
  {
    name: 'Paint',
    frame: 'framed',
    icon: (
      <>
        <path d="M3 25c-1-9 9-17 20-17 9 0 15 5 13 13-2 5-7 4-8 9s-5 9-12 9C8 39 4 33 3 25z" fill="#d4e8f6" stroke="#88b0cc" />
        <circle cx="8" cy="24" r="3.200" fill="#d84030" />
        <circle cx="14" cy="17" r="3.200" fill="#48b040" />
        <circle cx="22" cy="13" r="3.200" fill="#e8b030" />
        <circle cx="17" cy="31" r="3" fill="#775566" />
        <circle cx="28" cy="22" r="3" fill="#4080d0" />
        <path d="M25 39L34 14" stroke="#d8842c" strokeWidth="3" />
        <path d="M32 14l1-9 7-3-2 8-3 6z" fill="#b88850" />
      </>
    ),
  },
];

const FRAMES: Record<string, string> = {
  framed: 'border-[#d8c4cc]/70 bg-[linear-gradient(135deg,rgba(255,255,255,0.45),rgba(255,255,255,0.12)_60%,rgba(255,255,255,0.22))] shadow-[0_0_0_1px_rgba(40,20,30,0.6)]',
  active: 'border-[#f4e8ee] bg-[linear-gradient(135deg,rgba(255,255,255,0.85),rgba(255,255,255,0.45)_60%,rgba(255,255,255,0.6))] shadow-[0_0_0_1px_rgba(40,20,30,0.6)]',
  plain: 'border-transparent',
};

const Taskbar: React.FC = () => (
  <nav className="relative flex h-[47px] shrink-0 items-stretch overflow-hidden border-t border-[#c8b0ba] bg-[linear-gradient(90deg,#6d5060_0%,#5f4350_28%,#73525f_34%,#835f6c_45%,#8c6876_52%,#8f6c7e_60%,#b48ca8_65%,#98748c_68%,#95718a_80%,#735767_86%,#62485a_95%,#6c4c5c_100%)] font-['Open_Sans',sans-serif]">
    <svg className="absolute inset-0 h-full w-full" aria-hidden="true">
      <g filter="url(#soft)" opacity=".5">
        <path d="M620 8h360v50M620 26h325v30M800 30l40 20" fill="none" stroke="#713030" strokeWidth="5" />
        <ellipse cx="690" cy="18" rx="26" ry="6" fill="#4c2f3c" />
        <ellipse cx="850" cy="18" rx="26" ry="6" fill="#4c2f3c" />
        <ellipse cx="735" cy="46" rx="50" ry="13" fill="#94545c" />
        <path d="M1280 0l34 48" stroke="#694a5c" strokeWidth="6" />
        <path d="M1290 3h600" stroke="#6b3d4d" strokeWidth="7" />
      </g>
    </svg>
    <button type="button" aria-label="Start" className="relative ml-[10px] mr-[17px] w-[45px]">
      <svg viewBox="0 0 46 46" className="h-[45px] w-[45px]">
        <defs>
          <radialGradient id="orb" cx=".5" cy=".9" r=".9">
            <stop offset="0" stopColor="#30c8f0" />
            <stop offset=".6" stopColor="#1c5c90" />
            <stop offset="1" stopColor="#7898b0" />
          </radialGradient>
        </defs>
        <circle cx="23" cy="23" r="21.500" fill="url(#orb)" stroke="#1c3048" />
        <path d="M12 14q5-4 10-1l-2 9q-5-3-10 0z" fill="#e8602c" />
        <path d="M24 14q5 3 10-1l-2 9q-5 4-10 1z" fill="#88c040" />
        <path d="M10 24q5-3 10 0l-2 9q-5-3-10 0z" fill="#48a0e0" />
        <path d="M22 25q5 3 10-1l-2 9q-5 4-10 1z" fill="#f8c830" />
      </svg>
    </button>
    <div className="relative flex gap-1">
      {TASKS.map((t) => (
        <button
          type="button"
          key={t.name}
          aria-label={t.name}
          className={`flex items-center justify-center rounded-[3px] border ${t.name === 'Explorer' ? 'mr-1 w-[62px] outline outline-1 outline-offset-1 outline-white/30' : 'w-[66px]'} ${FRAMES[t.frame]}`}
        >
          <svg viewBox="0 0 42 42" className="h-10 w-10">{t.icon}</svg>
        </button>
      ))}
    </div>
    <div className="relative ml-auto flex items-center text-white">
      <span className="mb-1 text-[13px]">EN</span>
      <svg viewBox="0 0 12 8" className="ml-5 h-2 w-3"><path d="M1 7l5-5.500L11 7z" fill="#fff" stroke="#403038" /></svg>
      <svg viewBox="0 0 20 20" className="ml-4 h-5 w-5"><path d="M2 1v18h2v-8q4-2 6 0t7-1l2-5q-4 1-6-1t-9-1V1z" fill="#fff" stroke="#403038" /></svg>
      <svg viewBox="0 0 20 20" className="ml-[10px] h-5 w-5">
        <rect x="2" y="3" width="9" height="16" rx="1" fill="#fff" stroke="#fff" />
        <rect x="3.500" y="5" width="6" height="12.500" fill="#e8e8e8" stroke="#403038" />
        <path d="M4.500 1.500h4" stroke="#fff" strokeWidth="2" />
        <path d="M13 2v4M17 2v4M11 6h8v4q-1 3-3 3v6h-2v-6q-2 0-3-3z" fill="#fff" stroke="#fff" />
      </svg>
      <svg viewBox="0 0 18 18" className="ml-[11px] h-[18px] w-[18px]">
        {[4, 6, 9, 12].map((h, i) => (
          <rect key={h} x={1 + i * 3.300} y={16 - h} width="2.500" height={h} fill="#fff" />
        ))}
        <rect x="14.500" y="1" width="2.500" height="15" fill="none" stroke="#ddd" strokeWidth=".8" />
      </svg>
      <svg viewBox="0 0 20 20" className="ml-[10px] h-5 w-5">
        <path d="M1 7h4l5-5v16l-5-5H1z" fill="#fff" stroke="#403038" />
        <path d="M12.500 7q2 3 0 6M15 5q3 5 0 10M17.500 3.500q4 6.500 0 13" fill="none" stroke="#eee" />
      </svg>
      <div className="ml-[18px] mr-[11px] text-center text-[14px] leading-[22px]">
        <p>11:15 μμ</p>
        <p>22/1/2022</p>
      </div>
    </div>
    <button type="button" aria-label="Show desktop" className="relative w-[14px] border border-[#d8c4cc]/70 bg-[linear-gradient(#a08898,#5a4252_40%,#8a7080)]" />
  </nav>
);

const App: React.FC = () => {
  return (
    <div className="flex h-screen min-h-[600px] w-full flex-col overflow-hidden bg-[linear-gradient(#ffffff_50px,#fafafa_130px,#f2f2f2_300px,#e2e2e2_650px,#d7d7d7_900px)] font-['Liberation_Sans',Arial,sans-serif] text-[11px] leading-[15px] text-black">
      <TitleBar />
      <MenuBar />
      <Toolbar />
      <main className="flex min-h-0 grow">
        <Sidebar />
        <section className="flex min-w-0 grow flex-col">
          <GraphHeader />
          <div className="flex min-h-0 grow flex-col pl-[55px] pr-[25px]">
            <GroupDelayPlot />
            <div className="flex h-[51px] shrink-0 justify-center pt-[25px]">
              <Legend />
            </div>
          </div>
        </section>
      </main>
      <StatusBar />
      <Taskbar />
    </div>
  );
};

export default App;
